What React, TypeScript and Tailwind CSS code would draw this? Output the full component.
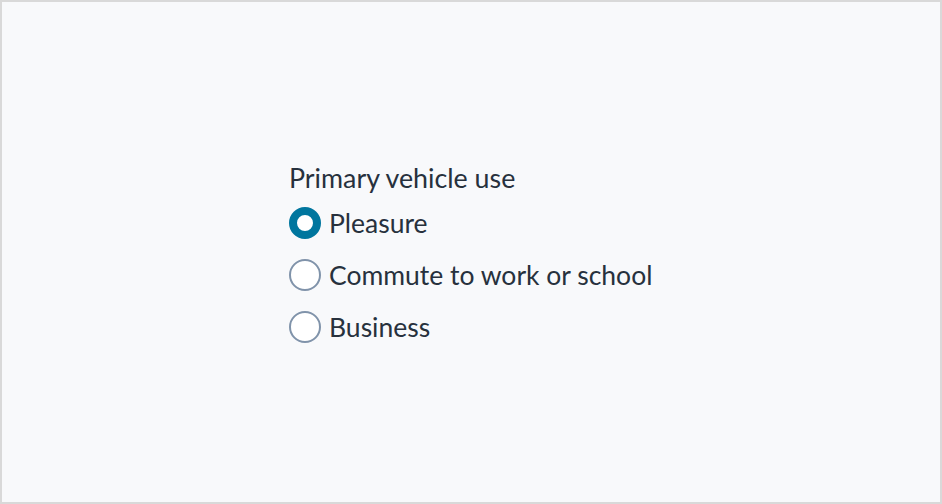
import { useState } from "react";

const options = ["Pleasure", "Commute to work or school", "Business"];

export default function App() {
  const [value, setValue] = useState("Pleasure");

  return (
    <div className="w-[942px] h-[504px] bg-[#f8f9fb] border-2 border-[#d9d9d9] flex items-center justify-center font-['Lato',sans-serif] text-[#27313d]">
      <fieldset className="flex flex-col w-[364px] mt-[1px]">
        <legend className="text-[26.8px] leading-[32px] mb-[13px]">Primary vehicle use</legend>
        <div className="flex flex-col gap-[20px]">
          {options.map((opt) => {
            const checked = value === opt;
            return (
              <label key={opt} className="flex items-center gap-[8px] cursor-pointer" onClick={() => setValue(opt)}>
                <span
                  className={
                    checked
                      ? "w-[32px] h-[32px] rounded-full bg-white border-[8px] border-[#00769e] shrink-0"
                      : "w-[32px] h-[32px] rounded-full bg-white border-2 border-[#8093aa] shrink-0"
                  }
                />
                <span className="text-[26.5px] leading-[32px]">{opt}</span>
              </label>
            );
          })}
        </div>
      </fieldset>
    </div>
  );
}
